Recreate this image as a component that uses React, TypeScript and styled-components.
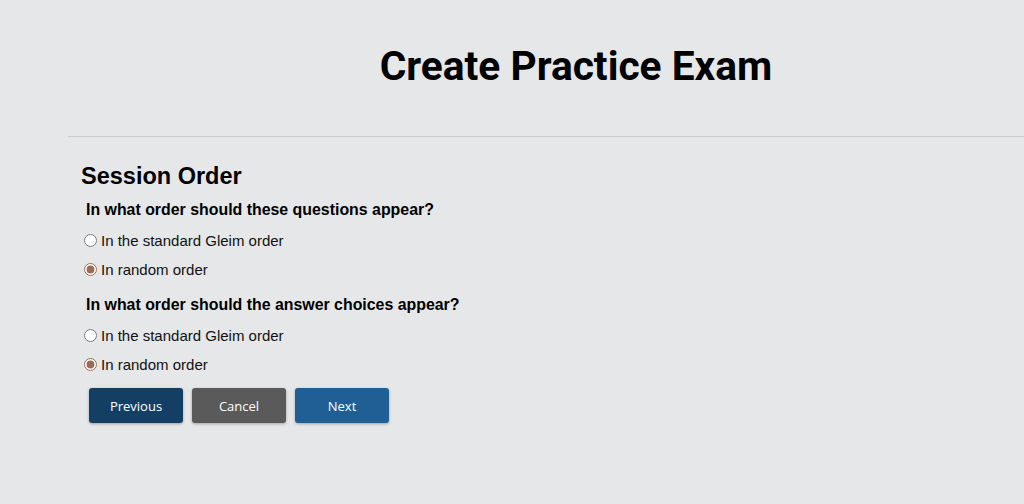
import React, { useState } from 'react';
import styled, { createGlobalStyle } from 'styled-components';

const GlobalStyle = createGlobalStyle`
  html, body {
    margin: 0;
    padding: 0;
    background: #e6e7e9;
  }
  body {
    font-family: 'Liberation Sans', Arial, sans-serif;
    color: #000;
  }
`;

type Order = 'standard' | 'random';

const questions = [
  { id: 'questions', label: 'In what order should these questions appear?' },
  { id: 'answers', label: 'In what order should the answer choices appear?' },
];

const options: { value: Order; label: string }[] = [
  { value: 'standard', label: 'In the standard Gleim order' },
  { value: 'random', label: 'In random order' },
];

export default function App() {
  const [answers, setAnswers] = useState<Record<string, Order>>({
    questions: 'random',
    answers: 'random',
  });

  return (
    <Page>
      <GlobalStyle />
      <Header>
        <Title>Create Practice Exam</Title>
      </Header>
      <Divider />
      <Content>
        <SectionTitle>Session Order</SectionTitle>
        {questions.map((q) => (
          <Question key={q.id}>
            <QuestionLabel>{q.label}</QuestionLabel>
            {options.map((o) => (
              <Option key={o.value}>
                <Radio
                  type="radio"
                  name={q.id}
                  checked={answers[q.id] === o.value}
                  onChange={() =>
                    setAnswers((prev) => ({ ...prev, [q.id]: o.value }))
                  }
                />
                {o.label}
              </Option>
            ))}
          </Question>
        ))}
        <Actions>
          <Button $variant="previous">Previous</Button>
          <Button $variant="cancel">Cancel</Button>
          <Button $variant="next">Next</Button>
        </Actions>
      </Content>
    </Page>
  );
}

const Page = styled.div`
  width: 1024px;
  height: 504px;
  overflow: hidden;
`;

const Header = styled.div`
  display: flex;
  justify-content: center;
  padding: 42px 0 0 128px;
  height: 93px;
  box-sizing: border-box;
`;

const Title = styled.h1`
  margin: 0;
  font-family: Roboto, 'Liberation Sans', sans-serif;
  font-weight: 700;
  font-size: 40.7px;
  line-height: 48px;
  color: #000;
`;

const Divider = styled.hr`
  margin: 43px 0 0 68px;
  border: none;
  border-top: 1px solid #c9cacc;
  height: 0;
`;

const Content = styled.div`
  padding: 25px 0 0 81px;
`;

const SectionTitle = styled.h2`
  margin: 0;
  font-size: 23.5px;
  line-height: 28px;
  font-weight: 700;
`;

const Question = styled.div`
  display: flex;
  flex-direction: column;
  padding-left: 3px;
  margin-top: 10px;
  & + & {
    margin-top: 11px;
  }
`;

const QuestionLabel = styled.div`
  font-size: 15.9px;
  font-weight: 700;
  line-height: 20px;
  padding-left: 2px;
  margin-bottom: 6px;
`;

const Option = styled.label`
  display: flex;
  align-items: center;
  gap: 4px;
  font-size: 15px;
  line-height: 29px;
  color: #111;
  cursor: pointer;
`;

const Radio = styled.input`
  margin: 0;
  width: 13px;
  height: 13px;
  accent-color: #9c6b55;
`;

const Actions = styled.div`
  display: flex;
  gap: 9px;
  padding: 9px 0 0 8px;
`;

const variantColors = {
  previous: '#143f65',
  cancel: '#5a5a5a',
  next: '#1f5f95',
};

const Button = styled.button<{ $variant: keyof typeof variantColors }>`
  width: 94px;
  height: 35px;
  border: none;
  border-radius: 3px;
  background: ${({ $variant }) => variantColors[$variant]};
  color: #fff;
  font-family: 'Open Sans', sans-serif;
  font-size: 13px;
  box-shadow: 0 1px 3px rgba(0, 0, 0, 0.3);
  cursor: pointer;
`;
